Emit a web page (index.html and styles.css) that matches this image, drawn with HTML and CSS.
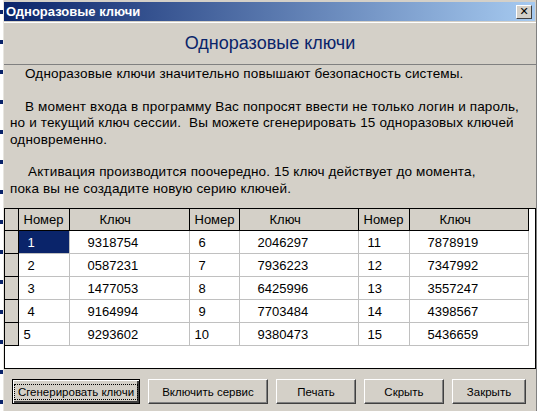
FILE: index.html
```html
<!DOCTYPE html>
<html lang="ru">
<head>
  <meta charset="UTF-8" />
  <title>Одноразовые ключи</title>
  <link rel="stylesheet" href="styles.css">
</head>
<body>

<div class="desk"></div>

<div class="window">
  <div class="titlebar">
    <span class="caption">Одноразовые ключи</span>
    <span class="close">&#x2715;</span>
  </div>

  <div class="banner">Одноразовые ключи</div>

  <div class="info">
    <p>Одноразовые ключи значительно повышают безопасность системы.</p>
    <p>В момент входа в программу Вас попросят ввести не только логин и пароль,<br>но и текущий ключ сессии.&nbsp; Вы можете сгенерировать 15 одноразовых ключей<br>одновременно.</p>
    <p class="wide">Активация производится поочередно. 15 ключ действует до момента,<br>пока вы не создадите новую серию ключей.</p>
  </div>

  <div class="grid">
    <table>
      <colgroup>
        <col class="c-ind"><col class="c-num"><col class="c-key"><col class="c-num2"><col class="c-key2"><col class="c-num"><col class="c-key2">
      </colgroup>
      <thead>
        <tr>
          <th class="ind"></th>
          <th class="num">Номер</th><th class="key">Ключ</th>
          <th class="num">Номер</th><th class="key">Ключ</th>
          <th class="num">Номер</th><th class="key">Ключ</th>
        </tr>
      </thead>
      <tbody>
        <tr>
          <td class="ind"></td>
          <td class="num sel pad">1</td><td class="key">9318754</td>
          <td class="num pad">6</td><td class="key">2046297</td>
          <td class="num pad">11</td><td class="key">7878919</td>
        </tr>
        <tr>
          <td class="ind"></td>
          <td class="num pad">2</td><td class="key">0587231</td>
          <td class="num pad">7</td><td class="key">7936223</td>
          <td class="num pad">12</td><td class="key">7347992</td>
        </tr>
        <tr>
          <td class="ind"></td>
          <td class="num pad">3</td><td class="key">1477053</td>
          <td class="num pad">8</td><td class="key">6425996</td>
          <td class="num pad">13</td><td class="key">3557247</td>
        </tr>
        <tr>
          <td class="ind"></td>
          <td class="num pad">4</td><td class="key">9164994</td>
          <td class="num pad">9</td><td class="key">7703484</td>
          <td class="num pad">14</td><td class="key">4398567</td>
        </tr>
        <tr>
          <td class="ind"></td>
          <td class="num">5</td><td class="key">9293602</td>
          <td class="num">10</td><td class="key">9380473</td>
          <td class="num pad">15</td><td class="key">5436659</td>
        </tr>
      </tbody>
    </table>
  </div>

  <div class="buttons">
    <button class="btn default"><span>Сгенерировать ключи</span></button>
    <button class="btn b-service">Включить сервис</button>
    <button class="btn b-small">Печать</button>
    <button class="btn b-small">Скрыть</button>
    <button class="btn b-close">Закрыть</button>
  </div>
</div>

</body>
</html>
```

FILE: styles.css
```css
body {
  margin: 0;
  height: 411px;
  overflow: hidden;
  background: #fff;
  display: flex;
  font-family: "Liberation Sans", Arial, sans-serif;
  font-size: 13px;
  color: #000;
}

.desk {
  width: 3px;
  background: repeating-linear-gradient(180deg, #fff 0, #fff 10px, #0a246a 10px, #0a246a 14px, #fff 14px, #fff 30px);
}

.window {
  width: 533px;
  background: #d4d0c8;
  border-left: 1px solid #e8e6e0;
  border-right: 1px solid #808080;
  display: flex;
  flex-direction: column;
  padding-top: 2px;
}

.titlebar {
  height: 19px;
  margin-right: 1px;
  background: linear-gradient(90deg, #0a246a, #a6caf0);
  display: flex;
  align-items: center;
  justify-content: space-between;
  padding: 0 3px 0 2px;
}

.caption {
  color: #fff;
  font-weight: bold;
  font-size: 13px;
}

.close {
  width: 16px;
  height: 14px;
  box-sizing: border-box;
  background: #d4d0c8;
  border: 1px solid;
  border-color: #fff #404040 #404040 #fff;
  font-family: "DejaVu Sans", sans-serif;
  font-size: 11px;
  font-weight: bold;
  line-height: 12px;
  text-align: center;
  color: #000;
}

.banner {
  height: 41px;
  margin-top: 1px;
  border-top: 1px solid #fff;
  border-bottom: 1px solid #808080;
  font-size: 18px;
  color: #0a246a;
  text-align: center;
  line-height: 41px;
}

.info {
  padding: 1px 0 0 6px;
  height: 142px;
  font-size: 13.5px;
  letter-spacing: 0.15px;
}

.info p {
  margin: 0 0 16px;
  line-height: 16.5px;
  text-indent: 15px;
}

.info p.wide {
  text-indent: 18px;
}

.grid {
  height: 159px;
  background: #fff;
  border: 1px solid #000;
}

table {
  border-collapse: collapse;
  table-layout: fixed;
  width: 523px;
}

.c-ind { width: 13px; }
.c-num { width: 51px; }
.c-key { width: 120px; }
.c-num2 { width: 50px; }
.c-key2 { width: 119px; }

th {
  height: 21px;
  background: #d4d0c8;
  font-weight: normal;
  text-align: left;
  border-right: 1px solid #000;
  border-bottom: 1px solid #000;
  padding: 0;
}

th.num { padding-left: 5px; }
th.key { padding-left: 30px; }

td {
  height: 22px;
  padding: 0;
  border-right: 1px solid #c0c0c0;
  border-bottom: 1px solid #c0c0c0;
}

td.ind {
  background: #d4d0c8;
  border-right: 1px solid #000;
  border-bottom: 1px solid #000;
}

td.num { padding-left: 5px; }
td.num.pad { padding-left: 9px; }
td.key { padding-left: 18px; }

td.sel {
  background: #0a246a;
  color: #fff;
}

.buttons {
  display: flex;
  gap: 8px;
  padding: 10px 0 0 8px;
}

.btn {
  height: 25px;
  background: #d4d0c8;
  border: 1px solid;
  border-color: #fff #404040 #404040 #fff;
  box-shadow: inset -1px -1px #808080;
  font: inherit;
  font-size: 11.5px;
  color: #000;
  padding: 0;
  white-space: nowrap;
}

.btn.default {
  width: 128px;
  border: 1px solid #000;
  box-shadow: inset 1px 1px #fff, inset -2px -2px #404040;
}

.btn.default span {
  border: 1px dotted #000;
  padding: 1px 3px;
}

.b-service { width: 120px; }
.b-small { width: 80px; }
.b-close { width: 74px; }
```
